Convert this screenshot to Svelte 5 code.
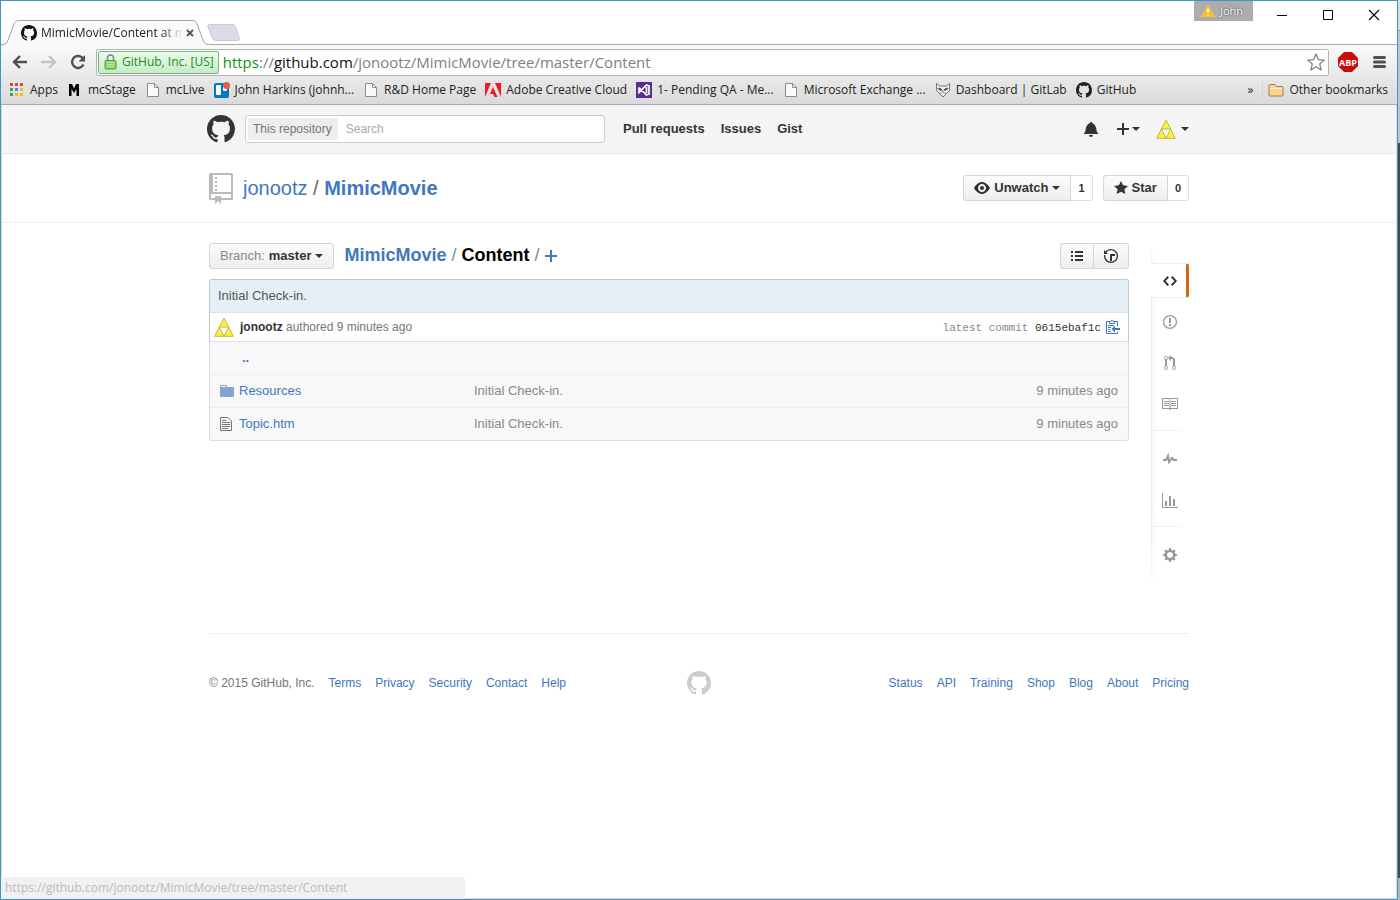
<script>
  const icons = {
    mark: { w: 16, d: 'M8 0C3.58 0 0 3.58 0 8c0 3.54 2.29 6.53 5.47 7.59.4.07.55-.17.55-.38 0-.19-.01-.82-.01-1.49-2.01.37-2.53-.49-2.69-.94-.09-.23-.48-.94-.82-1.13-.28-.15-.68-.52-.01-.53.63-.01 1.08.58 1.23.82.72 1.21 1.87.87 2.33.66.07-.52.28-.87.51-1.07-1.78-.2-3.64-.89-3.64-3.95 0-.87.31-1.59.82-2.15-.08-.2-.36-1.02.08-2.12 0 0 .67-.21 2.2.82.64-.18 1.32-.27 2-.27.68 0 1.36.09 2 .27 1.53-1.04 2.2-.82 2.2-.82.44 1.1.16 1.92.08 2.12.51.56.82 1.27.82 2.15 0 3.07-1.87 3.75-3.65 3.95.29.25.54.73.54 1.48 0 1.07-.01 1.93-.01 2.2 0 .21.15.46.55.38A8.013 8.013 0 0016 8c0-4.42-3.58-8-8-8z' },
    bell: { w: 14, d: 'M14 12v1H0v-1l.73-.58c.77-.77.81-2.55 1.19-4.42C2.69 3.23 6 2 6 2c0-.55.45-1 1-1s1 .45 1 1c0 0 3.39 1.23 4.16 5 .38 1.88.42 3.66 1.19 4.42l.66.58H14zm-7 4c1.11 0 2-.89 2-2H5c0 1.11.89 2 2 2z' },
    eye: { w: 16, d: 'M8.06 2C3 2 0 8 0 8s3 6 8.06 6C13 14 16 8 16 8s-3-6-7.94-6zM8 12c-2.2 0-4-1.78-4-4 0-2.2 1.8-4 4-4 2.22 0 4 1.8 4 4 0 2.22-1.78 4-4 4zm2-4c0 1.11-.89 2-2 2-1.11 0-2-.89-2-2 0-1.11.89-2 2-2 1.11 0 2 .89 2 2z' },
    star: { w: 14, d: 'M14 6l-4.9-.64L7 1 4.9 5.36 0 6l3.6 3.26L2.67 14 7 11.67 11.33 14l-.93-4.74z' },
    list: { w: 12, d: 'M0 3h2v2H0zM4 3h8v2H4zM0 7h2v2H0zM4 7h8v2H4zM0 11h2v2H0zM4 11h8v2H4z' },
    history: { w: 14, d: 'M8 13H6V6h5v2H8v5zM7 1C4.81 1 2.87 2.02 1.59 3.59L0 2v4h4L2.5 4.5C3.55 3.17 5.17 2.3 7 2.3c3.14 0 5.7 2.56 5.7 5.7s-2.56 5.7-5.7 5.7A5.71 5.71 0 011.3 8c0-.34.03-.67.09-1H.08C.03 7.33 0 7.66 0 8c0 3.86 3.14 7 7 7s7-3.14 7-7-3.14-7-7-7z' },
    code: { w: 14, d: 'M9.500 3L8 4.500 11.500 8 8 11.500 9.500 13 14 8 9.500 3zm-5 0L0 8l4.500 5L6 11.500 2.500 8 6 4.500 4.500 3z' },
    issue: { w: 14, d: 'M7 2.3c3.14 0 5.7 2.56 5.7 5.7s-2.56 5.7-5.7 5.7A5.71 5.71 0 0 1 1.300 8c0-3.14 2.56-5.7 5.7-5.7zM7 1C3.14 1 0 4.14 0 8s3.14 7 7 7 7-3.14 7-7-3.14-7-7-7zm1 3H6v5h2V4zm0 6H6v2h2v-2z' },
    pull: { w: 12, d: 'M11 11.28V5c-.03-.78-.34-1.47-.94-2.06C9.46 2.35 8.78 2.03 8 2H7V0L4 3l3 3V4h1c.27.02.48.11.69.31.21.2.3.42.31.69v6.28A1.993 1.993 0 0 0 10 15a1.993 1.993 0 0 0 1-3.72zm-1 2.92c-.66 0-1.2-.55-1.2-1.2 0-.65.55-1.2 1.2-1.2.65 0 1.2.55 1.2 1.2 0 .65-.55 1.2-1.2 1.2zM4 3c0-1.11-.89-2-2-2a1.993 1.993 0 0 0-1 3.72v6.56A1.993 1.993 0 0 0 2 15a1.993 1.993 0 0 0 1-3.72V4.72c.59-.34 1-.98 1-1.72zm-.8 10c0 .66-.55 1.2-1.2 1.2-.65 0-1.2-.55-1.2-1.2 0-.65.55-1.2 1.2-1.2.65 0 1.2.55 1.2 1.2zM2 4.2C1.34 4.2.8 3.65.8 3c0-.65.55-1.2 1.2-1.2.65 0 1.2.55 1.2 1.2 0 .65-.55 1.2-1.2 1.2z' },
    book: { w: 16, d: 'M2 5h5v1H2zM2 7h5v1H2zM2 9h5v1H2zM9 5h5v1H9zM9 7h5v1H9zM9 9h5v1H9zM0 2h7l1 .6 1-.6h7V13H9.200L8 14l-1.200-1H0zM1 3V12h6.500V3zM8.500 3V12H15V3z' },
    pulse: { w: 14, d: 'M11.500 8L8.800 5.400 6.600 8.500 5.500 1.600 2.380 8H0v2h3.600l.9-1.800.9 5.400L9 8.500l1.600 1.500H14V8z' },
    graph: { w: 16, d: 'M16 15v1H0V1h1v14h15zM5 14H3V9h2v5zm4 0H7V4h2v10zm4 0h-2V7h2v7z' },
    gear: { w: 14, d: 'M14 8.77v-1.6l-1.940-.64-.45-1.090.88-1.840-1.130-1.130-1.810.91-1.090-.45-.69-1.920h-1.600l-.63 1.940-1.110.45-1.840-.88-1.130 1.130.91 1.810-.45 1.090L0 7.230v1.590l1.940.64.45 1.090-.88 1.840 1.130 1.130 1.810-.91 1.090.45.69 1.920h1.590l.63-1.940 1.110-.45 1.840.88 1.130-1.130-.92-1.810.47-1.090L14 8.750v.02zM7 11c-1.660 0-3-1.340-3-3s1.340-3 3-3 3 1.340 3 3-1.340 3-3 3z' }
  };

  const bookmarks = [
    { icon: 'apps', label: 'Apps' },
    { icon: 'm', label: 'mcStage' },
    { icon: 'page', label: 'mcLive' },
    { icon: 'trello', label: 'John Harkins (johnh...' },
    { icon: 'page', label: 'R&D Home Page' },
    { icon: 'adobe', label: 'Adobe Creative Cloud' },
    { icon: 'vs', label: '1- Pending QA - Me...' },
    { icon: 'page', label: 'Microsoft Exchange ...' },
    { icon: 'gitlab', label: 'Dashboard | GitLab' },
    { icon: 'github', label: 'GitHub' }
  ];

  const appColors = ['#ea4335', '#ea4335', '#ea4335', '#34a853', '#4285f4', '#fbbc05', '#34a853', '#fbbc05', '#fbbc05'];

  const files = [
    { kind: 'folder', name: 'Resources', message: 'Initial Check-in.', age: '9 minutes ago' },
    { kind: 'file', name: 'Topic.htm', message: 'Initial Check-in.', age: '9 minutes ago' }
  ];

  const sideGroups = [
    [['code', 'Code'], ['issue', 'Issues'], ['pull', 'Pull requests'], ['book', 'Wiki']],
    [['pulse', 'Pulse'], ['graph', 'Graphs']],
    [['gear', 'Settings']]
  ];

  const footLeft = ['Terms', 'Privacy', 'Security', 'Contact', 'Help'];
  const footRight = ['Status', 'API', 'Training', 'Shop', 'Blog', 'About', 'Pricing'];
</script>

{#snippet icon(name, size = 16)}
  <svg class="icon" width={(icons[name].w * size) / 16} height={size} viewBox="0 0 {icons[name].w} 16" aria-hidden="true">
    <path fill="currentColor" fill-rule="evenodd" d={icons[name].d} />
  </svg>
{/snippet}

{#snippet triforce()}
  <svg class="icon" width="20" height="20" viewBox="0 0 20 20" aria-hidden="true">
    <path d="M10 1L14.700 10H5.300zM5.300 10L10 19.300H.7zM14.700 10L19.300 19.300H10z" fill="#fbf236" stroke="#b9b04a" stroke-width=".9" />
  </svg>
{/snippet}

{#snippet favicon(kind)}
  {#if kind === 'github'}
    {@render icon('mark')}
  {:else}
    <svg class="icon" width="16" height="16" viewBox="0 0 16 16" aria-hidden="true">
      {#if kind === 'apps'}
        {#each appColors as color, i}
          <rect x={1 + (i % 3) * 5} y={1 + Math.floor(i / 3) * 5} width="3" height="3" fill={color} />
        {/each}
      {:else if kind === 'm'}
        <path d="M2 2h3l2 4.500L9 2h3v12H9.500V7L7 11 4.500 7v7H2z" fill="#000" />
      {:else if kind === 'page'}
        <path d="M2.500 1.500h7l4 4v9h-11z" fill="#fafafa" stroke="#8c8c8c" /><path d="M9.500 1.500v4h4" fill="none" stroke="#8c8c8c" />
      {:else if kind === 'trello'}
        <rect y="1" width="15" height="15" rx="2" fill="#0079bf" /><rect x="2" y="3" width="5" height="10" rx="1" fill="#fff" /><rect x="9" y="3" width="4" height="6" rx="1" fill="#fff" /><circle cx="12.500" cy="3.500" r="3.500" fill="#eb5a46" />
      {:else if kind === 'adobe'}
        <path d="M0 1h6L0 15zM10 1h6v14zM8 5l4.500 10H9.500L8 12H5z" fill="#ed1c24" />
      {:else if kind === 'vs'}
        <rect width="16" height="16" fill="#5c2d91" /><path d="M3 5.500v5L10.500 3l2.500 1v8l-2.500 1L3 5.500M10.500 5v6" fill="none" stroke="#fff" stroke-width="1.700" />
      {:else if kind === 'gitlab'}
        <path d="M1.500 1.500l3 2.500h7l3-2.500v7L8 15 1.500 8.500z" fill="#ececec" stroke="#777" /><path d="M1.500 6.500L8 9l6.500-2.500M5 12l3-2 3 2" fill="none" stroke="#999" /><path d="M3.500 6l3 1.200-.8 1.200zM12.500 6l-3 1.200.8 1.200z" fill="#333" stroke="#333" stroke-width=".7" />
      {:else if kind === 'folder'}
        <path d="M1 3.500a1 1 0 011-1h5l1.500 2H14a1 1 0 011 1V13a1 1 0 01-1 1H2a1 1 0 01-1-1z" fill="#fbd590" stroke="#a87a3c" /><path d="M2 6.500h12" stroke="#fff0cc" />
      {/if}
    </svg>
  {/if}
{/snippet}

<div class="window">
  <div class="tabstrip">
    <div class="tab">
      <svg class="tab-shape" width="208" height="26" viewBox="0 0 208 26" aria-hidden="true">
        <path d="M0 24.500h1.500c3 0 4.500-1.500 5.500-4.500L13 4c1-2.500 2-3.500 4.500-3.500h174c2.500 0 3.500 1 4.500 3.500l6 16c1 3 2.500 4.500 6 4.500V26H0z" fill="#fafafa" />
        <path d="M0 24.500h1.500c3 0 4.500-1.500 5.500-4.500L13 4c1-2.500 2-3.500 4.500-3.500h174c2.500 0 3.500 1 4.500 3.500l6 16c1 3 2.500 4.500 6 4.500" fill="none" stroke="#a2a2a2" />
      </svg>
      <span class="tab-icon">{@render icon('mark')}</span>
      <span class="tab-title">MimicMovie/Content at m</span>
      <button class="plain tab-close" aria-label="Close tab">
        <svg class="icon" width="8" height="8" viewBox="0 0 8 8"><path d="M1 1l6 6M7 1L1 7" stroke="#555" stroke-width="1.800" /></svg>
      </button>
    </div>
    <button class="plain new-tab" aria-label="New tab">
      <svg class="icon" width="33" height="17" viewBox="0 0 33 17"><path d="M2.500.5H25c2 0 3 .8 3.600 2.400l3.700 10.800c.5 1.700 0 2.800-1.800 2.800H9c-2 0-3-.8-3.700-2.500L1 3C.4 1.200 1 .5 2.500.5z" fill="#d9dde3" stroke="#c9ccd1" /></svg>
    </button>
    <div class="window-controls">
      <button class="plain profile">
        <svg class="icon" width="14" height="12" viewBox="0 0 14 12" aria-hidden="true"><path d="M7 .5L13.500 11.500H.5z" fill="#fbc02d" stroke="#fbc02d" stroke-linejoin="round" /><path d="M7 3.500v4M7 9v1.500" stroke="#fff" stroke-width="1.400" /></svg>
        John
      </button>
      <button class="plain" aria-label="Minimize"><svg class="icon" width="12" height="12" viewBox="0 0 12 12"><path d="M1 6.500h10" stroke="#000" /></svg></button>
      <button class="plain" aria-label="Maximize"><svg class="icon" width="12" height="12" viewBox="0 0 12 12"><path d="M1.500 1.500h9v9h-9z" fill="none" stroke="#000" /></svg></button>
      <button class="plain" aria-label="Close"><svg class="icon" width="12" height="12" viewBox="0 0 12 12"><path d="M1 1l10 10M11 1L1 11" stroke="#000" stroke-width="1.100" /></svg></button>
    </div>
  </div>

  <div class="chrome">
    <div class="toolbar">
      <div class="nav-buttons">
        <button class="plain" aria-label="Back"><svg class="icon" width="16" height="16" viewBox="0 0 16 16"><path d="M15 8H2.500M8 2L2 8l6 6" fill="none" stroke="#505050" stroke-width="2.400" /></svg></button>
        <button class="plain" aria-label="Forward"><svg class="icon" width="16" height="16" viewBox="0 0 16 16"><path d="M0 8h13M8 2l6 6-6 6" fill="none" stroke="#c4c4c4" stroke-width="2.400" /></svg></button>
        <button class="plain" aria-label="Reload"><svg class="icon" width="16" height="16" viewBox="0 0 16 16"><path d="M13 4.500A6 6 0 1013.500 10.500" fill="none" stroke="#505050" stroke-width="2.400" /><path d="M15 1v6.500H8.500z" fill="#505050" /></svg></button>
      </div>
      <div class="omnibox">
        <span class="secure">
          <svg class="icon" width="13" height="16" viewBox="0 0 13 16" aria-hidden="true"><path d="M3.500 7V4a3 3 0 016 0v3" fill="none" stroke="#7d8a7d" stroke-width="1.600" /><rect x="1" y="6.500" width="11" height="8.500" rx="1" fill="#8ed16a" stroke="#4f9f3c" /><path d="M2.500 8.500h8M2.500 10.500h8M2.500 12.500h8" stroke="#bde8a4" /></svg>
          GitHub, Inc. [US]
        </span>
        <span class="url"><span class="scheme">https</span>://<span class="host">github.com</span>/jonootz/MimicMovie/tree/master/Content</span>
        <button class="plain" aria-label="Bookmark this page"><svg class="icon" width="18" height="18" viewBox="0 0 18 18"><path d="M9 1l2.300 5.700 6 .4-4.600 3.900 1.500 6L9 13.700 3.800 17l1.500-6L.7 7.100l6-.4z" fill="#fff" stroke="#808080" stroke-width="1.200" stroke-linejoin="round" /></svg></button>
      </div>
      <button class="plain abp">ABP</button>
      <button class="plain" aria-label="Menu"><svg class="icon" width="13" height="14" viewBox="0 0 13 14"><path d="M1.500 2.500h10M1.500 7h10M1.500 11.500h10" stroke="#505050" stroke-width="3" stroke-linecap="round" /></svg></button>
    </div>
    <nav class="bookmarks" aria-label="Bookmarks">
      {#each bookmarks as mark}
        <a href="#bookmark">{@render favicon(mark.icon)}{mark.label}</a>
      {/each}
      <button class="plain more">»</button>
      <a class="other" href="#other">{@render favicon('folder')}Other bookmarks</a>
    </nav>
  </div>

  <div class="page">
    <header class="site-header">
      <div class="container header-row">
        <a class="logo" href="#home" aria-label="GitHub">{@render icon('mark', 28)}</a>
        <form class="search">
          <label for="q">This repository</label>
          <input id="q" type="text" placeholder="Search" />
        </form>
        <nav class="site-nav">
          <a href="#pulls">Pull requests</a>
          <a href="#issues">Issues</a>
          <a href="#gist">Gist</a>
        </nav>
        <div class="user-nav">
          <a href="#notifications" aria-label="Notifications">{@render icon('bell')}</a>
          <button class="plain" aria-label="Create new"><svg class="icon" width="12" height="12" viewBox="0 0 12 12"><path d="M6 0v12M0 6h12" stroke="#333" stroke-width="2" /></svg><span class="caret"></span></button>
          <button class="plain account" aria-label="Account">{@render triforce()}<span class="caret"></span></button>
        </div>
      </div>
    </header>

    <div class="repo-head">
      <div class="container repo-row">
        <svg class="icon" width="24" height="32" viewBox="0 0 24 32" aria-hidden="true"><path d="M1.500 1h21a1.500 1.500 0 011.500 1.500v24a1.500 1.500 0 01-1.500 1.500H12v4l-3-3-3 3v-4H1.500A1.500 1.500 0 010 26.500v-24A1.500 1.500 0 011.500 1zM4 3v17h18V3zM2 22v4h4v-2h6v2h10v-4zM6 5h2v2H6zM6 9h2v2H6zM6 13h2v2H6zM6 17h2v2H6z" fill="#bbb" fill-rule="evenodd" /></svg>
        <h1><a href="#owner">jonootz</a> <span>/</span> <a href="#repo"><strong>MimicMovie</strong></a></h1>
        <div class="social">
          <button class="btn">{@render icon('eye')}Unwatch<span class="caret"></span></button><a class="count" href="#watchers">1</a>
        </div>
        <div class="social">
          <button class="btn">{@render icon('star')}Star</button><a class="count" href="#stars">0</a>
        </div>
      </div>
    </div>

    <div class="container content">
      <main>
        <div class="file-nav">
          <button class="btn branch"><span>Branch:</span>master<span class="caret"></span></button>
          <div class="crumbs">
            <a href="#root">MimicMovie</a><i>/</i><b>Content</b><i>/</i>
            <a class="add" href="#new" aria-label="Add file"><svg class="icon" width="12" height="12" viewBox="0 0 12 12"><path d="M6 0v12M0 6h12" stroke="currentColor" stroke-width="2" /></svg></a>
          </div>
          <div class="view-group">
            <button class="btn" aria-label="File list">{@render icon('list')}</button>
            <button class="btn" aria-label="History">{@render icon('history')}</button>
          </div>
        </div>

        <div class="commit">
          <p class="commit-title">Initial Check-in.</p>
          <div class="commit-meta">
            {@render triforce()}
            <span class="author"><strong>jonootz</strong> authored 9 minutes ago</span>
            <span class="sha">latest commit <a href="#commit">0615ebaf1c</a></span>
            <button class="plain copy" aria-label="Copy SHA"><svg class="icon" width="14" height="16" viewBox="0 0 14 16"><path d="M3.500 2.500h-3v12h11v-2M11.500 7V2.500h-3M3.500 4.500v-2H5L6 .8l1 1.700h1.500v2z" fill="none" stroke="currentColor" /><path d="M2 6h6v1H2zM2 8h3v1H2zM2 10h2v1H2zM2 12h3v1H2zM9 6.500V9h5v2H9v2.500L5.500 10z" fill="currentColor" /></svg></button>
          </div>
        </div>
        <table>
          <colgroup><col class="col-mark" /><col class="col-name" /><col /><col /></colgroup>
          <tbody>
            <tr><td></td><td class="up" colspan="3"><a href="#up">..</a></td></tr>
            {#each files as file}
              <tr>
                <td class="mark-cell">
                  {#if file.kind === 'folder'}
                    <svg class="icon" width="14" height="14" viewBox="0 0 14 14" aria-hidden="true"><path d="M0 2a1 1 0 011-1h5a1 1 0 011 1v1h6a1 1 0 011 1v8a1 1 0 01-1 1H1a1 1 0 01-1-1zM1 2v1h5V2z" fill="#80a6cd" fill-rule="evenodd" /></svg>
                  {:else}
                    <svg class="icon" width="12" height="14" viewBox="0 0 12 14" aria-hidden="true"><path d="M.5.5H8L11.500 4v9.500H.5zM2 3.500h4M2 5.500h8M2 7.500h8M2 9.500h8M2 11.500h6" fill="none" stroke="#777" /></svg>
                  {/if}
                </td>
                <td class="name"><a href="#file">{file.name}</a></td>
                <td class="message">{file.message}</td>
                <td class="age">{file.age}</td>
              </tr>
            {/each}
          </tbody>
        </table>
      </main>

      <nav class="side" aria-label="Repository">
        {#each sideGroups as group}
          <div class="side-group">
            {#each group as [name, label]}
              <a href="#{name}" aria-label={label} class:active={name === 'code'}>{@render icon(name)}</a>
            {/each}
          </div>
        {/each}
      </nav>
    </div>

    <footer class="container footer">
      <div class="foot-left"><span>© 2015 GitHub, Inc.</span>{#each footLeft as item}<a href="#foot">{item}</a>{/each}</div>
      <a class="foot-mark" href="#home" aria-label="GitHub">{@render icon('mark', 24)}</a>
      <div class="foot-right">{#each footRight as item}<a href="#foot">{item}</a>{/each}</div>
    </footer>
  </div>
  <div class="status">https://github.com/jonootz/MimicMovie/tree/master/Content</div>
</div>

<style>
  :global(body) {
    background: linear-gradient(#dcdcdc 0 30px, #999 30px 31px, #c4c4c4 31px 143px, #47474d 143px 878px, #b5b5bb 878px);
  }
  .window, .window * { box-sizing: border-box; }
  .window {
    position: relative;
    display: flex;
    flex-direction: column;
    min-height: 100vh;
    margin-right: 2px;
    border: 1px solid #3c96cc;
    background: #fff;
    font: 12px/16px "Open Sans", "Noto Sans", sans-serif;
    color: #222;
  }
  .icon { display: block; flex: none; }
  a { color: #4078c0; text-decoration: none; }
  .plain {
    display: flex;
    align-items: center;
    padding: 0;
    border: 0;
    background: none;
    color: inherit;
    font: inherit;
  }

  .tabstrip {
    display: flex;
    align-items: flex-end;
    height: 44px;
    border-bottom: 1px solid #a9a9a9;
  }
  .tab {
    position: relative;
    display: flex;
    align-items: center;
    width: 208px;
    height: 25px;
    margin-bottom: -1px;
    padding: 0 15px 0 20px;
  }
  .tab-shape { position: absolute; left: 0; top: 0; }
  .tab-icon, .tab-title, .tab-close { position: relative; }
  .tab-icon { color: #111; }
  .tab-title {
    width: 144px;
    margin: 0 1px 0 4px;
    white-space: nowrap;
    mask-image: linear-gradient(90deg, #000 120px, transparent 142px);
  }
  .new-tab { margin-bottom: 3px; margin-left: -2px; }
  .window-controls {
    display: flex;
    align-items: center;
    align-self: flex-start;
    gap: 34px;
    height: 28px;
    margin-left: auto;
    padding-right: 17px;
  }
  .profile {
    align-self: flex-start;
    gap: 5px;
    width: 59px;
    height: 20px;
    margin-right: -11px;
    padding-left: 7px;
    background: #adadad;
    color: #fff;
    font-size: 11px;
    text-shadow: 0 0 2px #222;
  }

  .chrome { background: linear-gradient(#fafafa, #dadada); border-bottom: 1px solid #a9a9a9; }
  .toolbar { display: flex; align-items: center; height: 32px; padding: 2px 11px 0; }
  .nav-buttons { display: flex; gap: 13px; margin-right: 10px; }
  .omnibox {
    display: flex;
    flex: 1;
    align-items: center;
    height: 27px;
    margin-right: 9px;
    padding: 0 3px 0 1px;
    border: 1px solid #b5b5b5;
    border-radius: 2px;
    background: #fff;
  }
  .secure {
    display: flex;
    align-items: center;
    gap: 5px;
    height: 23px;
    padding: 0 4px 0 5px;
    border: 1px solid #76b776;
    border-radius: 2px;
    background: linear-gradient(#eefaee, #c6ebc6);
    color: #159015;
    white-space: nowrap;
  }
  .url { flex: 1; margin-left: 4px; color: #808080; font-size: 15px; white-space: nowrap; }
  .scheme { color: #159015; }
  .host { color: #111; }
  .abp {
    justify-content: center;
    width: 20px;
    height: 20px;
    margin-right: 15px;
    background: #c70d0d;
    clip-path: polygon(30% 0, 70% 0, 100% 30%, 100% 70%, 70% 100%, 30% 100%, 0 70%, 0 30%);
    color: #fff;
    font: bold 9px "Open Sans", sans-serif;
  }
  .bookmarks {
    display: flex;
    align-items: center;
    gap: 9px;
    height: 27px;
    padding: 0 9px 1px 8px;
    white-space: nowrap;
  }
  .bookmarks a { display: flex; align-items: center; gap: 5px; color: #222; }
  .more { margin-left: auto; }
  .bookmarks .other { padding-left: 5px; border-left: 1px solid #c5d3de; }

  .page {
    flex: 1;
    border: solid #dcdcdc;
    border-width: 0 1px 1px;
    font: 13px/18px "Liberation Sans", Arial, sans-serif;
    color: #333;
  }
  .container { width: 980px; max-width: 100%; margin: 0 auto; }
  .caret {
    width: 0;
    height: 0;
    border: 4px solid transparent;
    border-top-color: #333;
    border-bottom: 0;
  }
  .site-header { border-bottom: 1px solid #e5e5e5; background: #f5f5f5; }
  .header-row { display: flex; align-items: center; height: 48px; }
  .logo { margin: 0 10px 0 -2px; color: #333; }
  .search {
    display: flex;
    align-items: center;
    width: 360px;
    height: 28px;
    padding: 2px;
    border: 1px solid #ccc;
    border-radius: 3px;
    background: #fff;
    font-size: 12px;
  }
  .search label { padding: 2px 6px 2px 5px; border-radius: 2px; background: #eee; color: #767676; white-space: nowrap; }
  .search input {
    flex: 1;
    min-width: 0;
    padding: 0 8px;
    border: 0;
    outline: 0;
    background: none;
    font: inherit;
  }
  .search input::placeholder { color: #aaa; }
  .site-nav { display: flex; gap: 16px; margin-left: 18px; font-weight: bold; }
  .site-nav a { color: #333; }
  .user-nav { display: flex; align-items: center; gap: 19px; margin-left: auto; }
  .user-nav a { color: #333; }
  .user-nav .plain { gap: 3px; }
  .user-nav .account { gap: 5px; margin-left: -3px; }

  .repo-head { border-bottom: 1px solid #eee; }
  .repo-row { display: flex; align-items: center; height: 68px; gap: 10px; }
  h1 { flex: 1; margin: 0; font-size: 20px; font-weight: normal; line-height: 28px; color: #666; }
  .btn {
    display: flex;
    align-items: center;
    justify-content: center;
    gap: 4px;
    height: 26px;
    padding: 0 10px;
    border: 1px solid #d5d5d5;
    border-radius: 3px;
    background: linear-gradient(#fcfcfc, #eee);
    color: #333;
    font: bold 13px/16px "Liberation Sans", Arial, sans-serif;
  }
  .social { display: flex; }
  .social .btn { border-radius: 3px 0 0 3px; }
  .count {
    display: flex;
    align-items: center;
    padding: 0 7px;
    border: 1px solid #ddd;
    border-left: 0;
    border-radius: 0 3px 3px 0;
    color: #333;
    font-size: 11px;
    font-weight: bold;
  }

  .content { display: flex; align-items: flex-start; gap: 22px; padding-top: 20px; }
  main { flex: 1; }
  .file-nav { display: flex; align-items: center; margin-bottom: 10px; }
  .branch span:first-child { color: #888; font-weight: normal; }
  .crumbs {
    display: flex;
    align-items: center;
    flex: 1;
    margin-left: 10px;
    padding-bottom: 2px;
    font-size: 18px;
    line-height: 24px;
  }
  .crumbs a { font-weight: bold; }
  .crumbs b { color: #000; }
  .crumbs i { margin: 0 5px; color: #888; font-style: normal; }
  .crumbs .add { padding-top: 2px; }
  .view-group { display: flex; }
  .view-group .btn:first-child { border-radius: 3px 0 0 3px; border-right: 0; }
  .view-group .btn:last-child { border-radius: 0 3px 3px 0; }

  .commit { border: 1px solid #b7cbd6; border-bottom: 0; border-radius: 3px 3px 0 0; }
  .commit-title { margin: 0; padding: 8px; background: #e4f0f5; color: #555; line-height: 16px; }
  .commit-meta {
    display: flex;
    align-items: center;
    height: 30px;
    padding: 0 8px 0 4px;
    border-top: 1px solid #d8e6ec;
    border-bottom: 1px solid #d8e6ec;
    font-size: 12px;
  }
  .author { flex: 1; margin-left: 6px; color: #767676; }
  .author strong { color: #333; }
  .sha { padding-top: 2px; font: 11px/16px "Liberation Mono", monospace; color: #888; }
  .sha a { color: #333; }
  .copy { margin-left: 5px; color: #4078c0; }
  table {
    width: 100%;
    border: 1px solid #ddd;
    border-top: 0;
    border-radius: 0 0 3px 3px;
    border-spacing: 0;
    background: #f8f8f8;
    table-layout: fixed;
  }
  .col-mark { width: 29px; }
  .col-name { width: 235px; }
  td { height: 33px; padding: 0; border-top: 1px solid #eee; line-height: 18px; }
  tr:first-child td { height: 32px; border-top: 0; }
  .mark-cell { padding-left: 10px; }
  .up { padding-left: 3px; font-weight: bold; }
  td.message { color: #888; }
  td.age { padding-right: 10px; color: #888; text-align: right; }

  .side {
    position: relative;
    width: 38px;
    margin-top: 4px;
    padding: 16px 0 8px;
  }
  .side::before {
    content: "";
    position: absolute;
    inset: 0 auto 0 0;
    width: 5px;
    border-left: 1px solid #eee;
    background: linear-gradient(90deg, #f7f7f7, #fff);
    mask-image: linear-gradient(transparent, #000 16px calc(100% - 50px), transparent);
  }
  .side-group { position: relative; display: grid; gap: 6px; padding-bottom: 9px; }
  .side-group + .side-group {
    padding-top: 10px;
    border-top: 1px solid;
    border-image: linear-gradient(90deg, #eee 60%, #fff 90%) 1 0 0;
  }
  .side a {
    display: flex;
    align-items: center;
    justify-content: center;
    height: 35px;
    color: #999;
  }
  .side a.active {
    padding-left: 3px;
    border: solid #eee;
    border-width: 1px 0;
    border-right: 3px solid #d26911;
    border-radius: 0 3px 3px 0;
    background: #fff;
    color: #333;
  }

  .footer {
    display: grid;
    grid-template-columns: 1fr auto 1fr;
    align-items: center;
    margin-top: 44px;
    padding: 37px 0;
    border-top: 1px solid #eee;
    font-size: 12px;
    color: #767676;
  }
  .foot-left, .foot-right { display: flex; gap: 14px; }
  .foot-right { justify-content: flex-end; }
  .foot-mark { color: #ccc; }
  .status {
    position: absolute;
    left: 0;
    bottom: 0;
    width: 464px;
    padding: 3px 4px;
    border-radius: 0 3px 0 0;
    background: #f1f1f1;
    color: #bbb;
  }
</style>
